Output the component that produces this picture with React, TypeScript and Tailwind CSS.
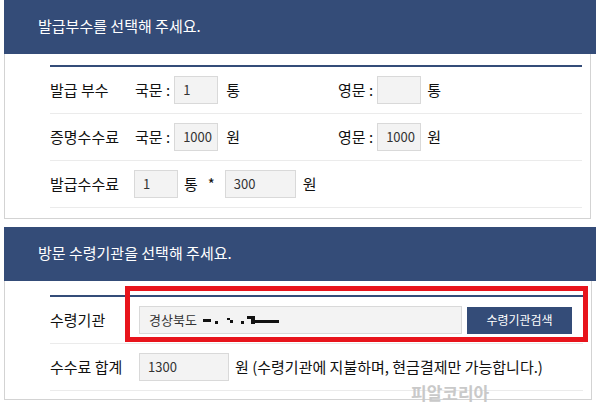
const font = { fontFamily: '"Noto Sans CJK KR", "Noto Sans", sans-serif' };

function Box({ value, w = "w-[44px]" }: { value: string; w?: string }) {
  return (
    <div
      className={`${w} h-[28px] shrink-0 bg-[#f3f3f3] border border-[#d9d9d9] flex items-center pl-[8px] text-[13px] text-[#333]`}
    >
      {value}
    </div>
  );
}

function Row({ children }: { children: React.ReactNode }) {
  return <div className="h-[47px] flex items-center border-b border-[#ebebeb]">{children}</div>;
}

function Header({ title }: { title: string }) {
  return (
    <div className="w-[592px] h-[54px] bg-[#344c78] flex items-center pl-[34px] pb-[1px] text-white text-[15px]">
      {title}
    </div>
  );
}

function Redacted() {
  return (
    <svg width="80" height="10" viewBox="0 0 80 10" className="ml-[6px]">
      <rect x="0" y="4" width="8" height="3" fill="#111" />
      <rect x="12" y="6" width="3" height="3" fill="#111" />
      <rect x="24" y="3" width="3" height="2" fill="#111" />
      <rect x="27" y="5" width="3" height="3" fill="#111" />
      <rect x="38" y="6" width="3" height="3" fill="#111" />
      <rect x="44" y="1" width="8" height="3" fill="#111" />
      <rect x="48" y="1" width="4" height="8" fill="#111" />
      <rect x="52" y="5" width="24" height="3" fill="#111" />
    </svg>
  );
}

export default function App() {
  return (
    <div className="w-[599px] h-[408px] bg-white pl-[4px]" style={font}>
      <Header title="발급부수를 선택해 주세요." />
      <div className="w-[587px] border-x border-b border-[#d3d3d3] pl-[45px] pr-[8px] pt-[11px] pb-[10px] text-[15px] text-[#111]">
        <div className="h-[2px] bg-[#344c78]" />
        <Row>
          <div className="w-[85px]">발급 부수</div>
          <div className="w-[203px] flex items-center">
            <span>국문 :</span>
            <div className="ml-[4px]"><Box value="1" /></div>
            <span className="ml-[8px]">통</span>
          </div>
          <span>영문 :</span>
          <div className="ml-[4px]"><Box value="" /></div>
          <span className="ml-[6px]">통</span>
        </Row>
        <Row>
          <div className="w-[85px]">증명수수료</div>
          <div className="w-[203px] flex items-center">
            <span>국문 :</span>
            <div className="ml-[4px]"><Box value="1000" /></div>
            <span className="ml-[8px]">원</span>
          </div>
          <span>영문 :</span>
          <div className="ml-[4px]"><Box value="1000" /></div>
          <span className="ml-[6px]">원</span>
        </Row>
        <Row>
          <div className="w-[84px]">발급수수료</div>
          <Box value="1" />
          <span className="ml-[6px]">통</span>
          <span className="ml-[10px] mr-[10px]">*</span>
          <Box value="300" w="w-[71px]" />
          <span className="ml-[7px]">원</span>
        </Row>
      </div>

      <div className="h-[8px]" />
      <Header title="방문 수령기관을 선택해 주세요." />
      <div className="relative w-[588px] border-x border-b border-[#d3d3d3] pl-[45px] pr-[8px] pt-[14px] pb-[8px] text-[15px] text-[#111]">
        <div className="h-[2px] bg-[#344c78]" />
        <Row>
          <div className="w-[89px]">수령기관</div>
          <div className="w-[323px] h-[28px] bg-[#f3f3f3] border border-[#d9d9d9] flex items-center pl-[9px] text-[13px] text-[#333]">
            경상북도
            <Redacted />
          </div>
          <button className="ml-[5px] w-[105px] h-[27px] bg-[#344c78] text-white text-[12px]">
            수령기관검색
          </button>
        </Row>
        <Row>
          <div className="w-[89px]">수수료 합계</div>
          <Box value="1300" w="w-[90px]" />
          <span className="ml-[6px]">원 (수령기관에 지불하며, 현금결제만 가능합니다.)</span>
        </Row>
        <div className="absolute left-[120px] top-[5px] w-[463px] h-[56px] border-[5px] border-[#e8141c]" />
        <div className="absolute left-[406px] top-[99px] text-[17px] font-bold text-[#c9c9c9]">피알코리아</div>
      </div>
    </div>
  );
}
